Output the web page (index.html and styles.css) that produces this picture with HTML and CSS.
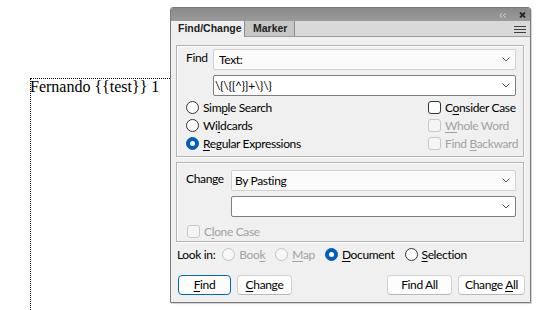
FILE: index.html
```html
<!DOCTYPE html>
<html>
<head>
<meta charset="utf-8">
<link rel="stylesheet" href="styles.css">
</head>
<body>
<div class="page">
  <div class="frame"><p class="doc-text">Fernando {{test}} 1</p></div>

  <div class="panel">
    <div class="titlebar">
      <svg class="collapse" width="7" height="5" viewBox="0 0 7 5"><path d="M3 0.5 L0.8 2.5 L3 4.5 M6.5 0.5 L4.3 2.5 L6.5 4.5" fill="none" stroke="#dadada" stroke-width="1"/></svg>
      <svg class="close" width="7" height="6" viewBox="0 0 7 6"><path d="M1 0.5 L6 5.5 M6 0.5 L1 5.5" stroke="#262626" stroke-width="1.8"/></svg>
    </div>
    <div class="tabbar">
      <div class="tab active">Find/Change</div>
      <div class="tab">Marker</div>
      <div class="tab-fill"></div>
      <svg class="menu" width="12" height="8" viewBox="0 0 12 8"><path d="M0 0.5 H12 M0 3.5 H12 M0 6.5 H12" stroke="#3c3c3c" stroke-width="1"/></svg>
    </div>

    <div class="body">
      <div class="group find-group">
        <span class="field-label">Find</span>
        <div class="select light"><span class="val pad5">Text:</span><svg class="chev" width="8" height="5" viewBox="0 0 8 5"><path d="M0.5 0.5 L4 4 L7.5 0.5" fill="none" stroke="#555" stroke-width="1"/></svg></div>
        <span></span>
        <div class="select dark"><span class="val pad1">\{\{[^}]+\}\}</span><svg class="chev" width="8" height="5" viewBox="0 0 8 5"><path d="M0.5 0.5 L4 4 L7.5 0.5" fill="none" stroke="#555" stroke-width="1"/></svg></div>
        <div class="options">
          <div class="opt-col">
            <div class="opt"><span class="radio"></span><span>Sim<u>p</u>le Search</span></div>
            <div class="opt"><span class="radio"></span><span>Wi<u>l</u>dcards</span></div>
            <div class="opt"><span class="radio on"></span><span><u>R</u>egular Expressions</span></div>
          </div>
          <div class="opt-col checks">
            <div class="opt"><span class="check"></span><span>C<u>o</u>nsider Case</span></div>
            <div class="opt disabled"><span class="check"></span><span><u>W</u>hole Word</span></div>
            <div class="opt disabled"><span class="check"></span><span>Find <u>B</u>ackward</span></div>
          </div>
        </div>
      </div>

      <div class="group change-group">
        <span class="field-label">Change</span>
        <div class="select light"><span class="val pad3">By Pasting</span><svg class="chev" width="8" height="5" viewBox="0 0 8 5"><path d="M0.5 0.5 L4 4 L7.5 0.5" fill="none" stroke="#555" stroke-width="1"/></svg></div>
        <span></span>
        <div class="select dark"><span class="val pad3"></span><svg class="chev" width="8" height="5" viewBox="0 0 8 5"><path d="M0.5 0.5 L4 4 L7.5 0.5" fill="none" stroke="#555" stroke-width="1"/></svg></div>
        <div class="options single">
          <div class="opt disabled clone"><span class="check"></span><span>C<u>l</u>one Case</span></div>
        </div>
      </div>

      <div class="lookin">
        <span class="lookin-label">Look in:</span>
        <div class="opt disabled"><span class="radio"></span><span>Boo<u>k</u></span></div>
        <div class="opt disabled"><span class="radio"></span><span><u>M</u>ap</span></div>
        <div class="opt"><span class="radio on"></span><span><u>D</u>ocument</span></div>
        <div class="opt"><span class="radio"></span><span><u>S</u>election</span></div>
      </div>

      <div class="buttons">
        <button class="btn default w-find"><u>F</u>ind</button>
        <button class="btn w-change"><u>C</u>hange</button>
        <span class="spacer"></span>
        <button class="btn w-findall">Find All</button>
        <button class="btn w-changeall">Change <u>A</u>ll</button>
      </div>
    </div>
  </div>
</div>
</body>
</html>
```

FILE: styles.css
```css
* { box-sizing: border-box; }
html, body { margin: 0; padding: 0; background: #fff; }
.page { position: relative; width: 540px; height: 310px; overflow: hidden; }

.frame {
  position: absolute;
  left: 30px;
  top: 78px;
  width: 220px;
  height: 260px;
  border-top: 1px dotted #000;
  border-left: 1px dotted #000;
}
.doc-text {
  margin: 1px 0 0 -1px;
  font-family: "Liberation Serif", serif;
  font-size: 16px;
  line-height: 14px;
  color: #000;
  white-space: nowrap;
}

.panel {
  position: absolute;
  left: 170px;
  top: 7px;
  width: 361px;
  height: 296px;
  border: 1px solid #7a7a7a;
  border-radius: 3px 3px 0 0;
  background: #f0f0f0;
  display: flex;
  flex-direction: column;
  box-shadow: 1px 1px 1px rgba(0,0,0,0.18);
  font-family: "Lato", sans-serif;
  font-size: 12px;
  letter-spacing: -0.35px;
  color: #000;
}

.titlebar {
  height: 13px;
  background: linear-gradient(#8a8a8a, #9a9a9a);
  display: flex;
  align-items: center;
  justify-content: flex-end;
  gap: 13px;
  padding-right: 4px;
  border-radius: 2px 2px 0 0;
}
.titlebar .collapse { margin-top: 1px; }

.tabbar {
  height: 16px;
  background: #d9d9d9;
  display: flex;
  align-items: stretch;
  border-bottom: 1px solid #9c9c9c;
  position: relative;
}
.tab {
  font-family: "Liberation Sans", sans-serif;
  font-weight: bold;
  font-size: 10.5px;
  letter-spacing: 0;
  line-height: 15px;
  padding: 0 6px;
  color: #222;
  border-right: 1px solid #8e8e8e;
}
.tab.active {
  width: 74px;
  background: #efefef;
  margin-bottom: -1px;
  padding-left: 7px;
}
.tab:not(.active) {
  width: 50px;
  background: #c6c6c6;
  padding-left: 8px;
}
.tab-fill { flex: 1; }
.menu { position: absolute; right: 4px; top: 5px; }

.body {
  flex: 1;
  padding: 8px 6px 0 5px;
  display: flex;
  flex-direction: column;
}

.group {
  border: 1px solid #b3b3b3;
  box-shadow: inset 1px 1px 0 #fff, 1px 1px 0 #fff;
  display: grid;
  align-items: center;
  padding: 3px 6px 4px 9px;
}
.find-group {
  grid-template-columns: 27px 1fr;
  grid-template-rows: 21px 21px auto;
  row-gap: 5px;
  height: 112px;
}
.change-group {
  grid-template-columns: 45px 1fr;
  grid-template-rows: 21px 21px auto;
  row-gap: 5px;
  margin-top: 5px;
  padding-top: 7px;
  height: 80px;
}
.field-label { align-self: start; padding-top: 1px; line-height: 16px; }

.select {
  height: 21px;
  background: #fff;
  border: 1px solid #c4c4c4;
  border-radius: 2px;
  display: flex;
  align-items: center;
  justify-content: space-between;
  padding-right: 5px;
  margin-right: 1px;
}
.select.light { background: #fbfbfb; border-color: #d0d0d0; }
.select.dark { border-color: #7f7f7f; }
.val { white-space: nowrap; line-height: 16px; }
.pad5 { padding-left: 5px; }
.pad1 { padding-left: 1px; }
.pad3 { padding-left: 3px; }
.chev { flex: none; }

.options {
  grid-column: 1 / -1;
  display: flex;
  justify-content: space-between;
  margin-top: -3px;
}
.options.single { margin-top: 0; }
.opt-col { display: flex; flex-direction: column; }
.checks { width: 89px; }
.opt {
  height: 18px;
  display: flex;
  align-items: center;
  gap: 4px;
  white-space: nowrap;
}
.opt.clone { margin-left: 1px; }
.opt.disabled { color: #a2a2a2; }
.opt u, .btn u { text-decoration-thickness: 1px; text-underline-offset: 2px; }

.radio {
  width: 13px;
  height: 13px;
  border-radius: 50%;
  border: 1px solid #333;
  background: #fff;
  flex: none;
  position: relative;
}
.radio.on { background: #005fb8; border-color: #005fb8; }
.radio.on::after {
  content: "";
  position: absolute;
  left: 3px;
  top: 3px;
  width: 5px;
  height: 5px;
  border-radius: 50%;
  background: #fff;
}
.opt.disabled .radio { border-color: #c2c2c2; background: #f7f7f7; }

.check {
  width: 13px;
  height: 13px;
  border-radius: 3px;
  border: 1px solid #333;
  background: #fff;
  flex: none;
}
.opt.disabled .check { border-color: #c8c8c8; background: #f5f5f5; }

.lookin {
  display: flex;
  align-items: center;
  height: 18px;
  margin-top: 3px;
  padding-left: 1px;
  gap: 10px;
}
.lookin-label { margin-right: -3px; }

.buttons {
  display: flex;
  margin-top: 12px;
  gap: 6px;
  padding-left: 2px;
  margin-right: -1px;
}
.spacer { flex: 1; }
.btn {
  height: 20px;
  font-family: "Lato", sans-serif;
  font-size: 12px;
  letter-spacing: -0.35px;
  line-height: 16px;
  padding: 0;
  background: #fdfdfd;
  border: 1px solid #d0d0d0;
  border-bottom-color: #b8b8b8;
  border-radius: 4px;
  color: #000;
}
.btn.default { border-color: #0067c0; }
.w-find { width: 53px; }
.w-change { width: 55px; }
.w-findall { width: 65px; }
.w-changeall { width: 67px; }
```
